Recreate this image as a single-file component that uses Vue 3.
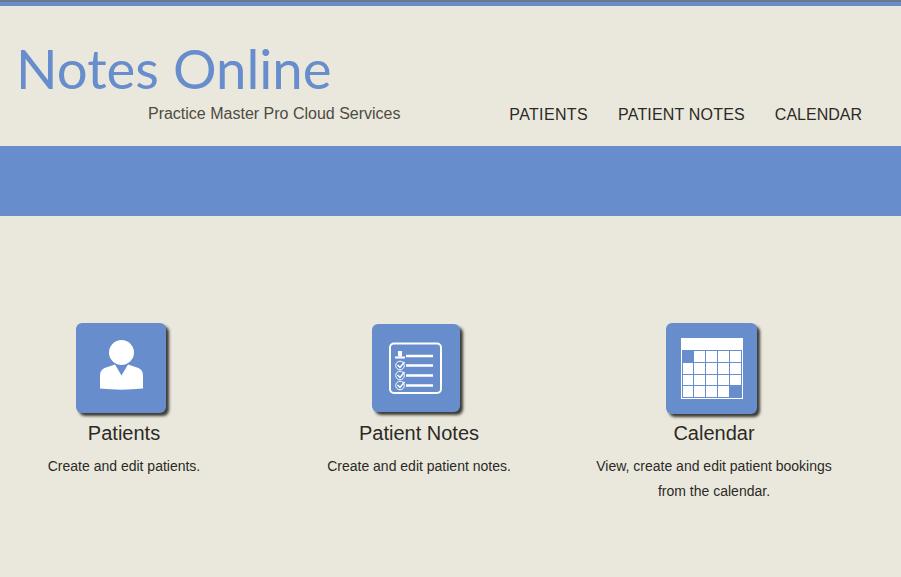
<script setup>
const navItems = ['PATIENTS', 'PATIENT NOTES', 'CALENDAR']

const calendarRows = [
  [1, 0, 0, 0, 0],
  [0, 0, 0, 0, 0],
  [0, 0, 0, 0, 0],
  [0, 0, 0, 0, 1]
]
</script>

<template>
  <div class="page">
    <header class="site-header">
      <div class="brand">
        <h1 class="brand-title">Notes Online</h1>
        <p class="brand-sub">Practice Master Pro Cloud Services</p>
      </div>
      <nav class="main-nav">
        <a v-for="item in navItems" :key="item" class="nav-link">{{ item }}</a>
      </nav>
    </header>

    <div class="banner"></div>

    <main class="features">
      <section class="feature">
        <div class="tile tile-patients">
          <svg class="icon-person" width="44" height="50" viewBox="0 0 44 50">
            <circle cx="21.500" cy="12.500" r="12.500" fill="#fff" />
            <path d="M0 36c0-5 2-7 6-8.500l9-3 6.500 11 6.500-11 9 3c4 1.500 6 3.500 6 8.500v12.500c-14 1.500-29 1.500-43 0z" fill="#fff" />
          </svg>
        </div>
        <h2 class="feature-title">Patients</h2>
        <p class="feature-text">Create and edit patients.</p>
      </section>

      <section class="feature">
        <div class="tile tile-notes">
          <svg width="54" height="52" viewBox="0 0 54 52" fill="none" stroke="#fff">
            <rect x="1" y="1.500" width="51" height="49.500" rx="4" stroke-width="2" />
            <rect x="9" y="9" width="4" height="5.500" fill="#fff" stroke="none" />
            <rect x="6" y="14.500" width="10" height="2" fill="#fff" stroke="none" />
            <path d="M17 14h27M17 23.500h27M17 33.500h27M17 43.500h27" stroke-width="2.500" />
            <g stroke-width="1">
              <circle cx="11" cy="23.500" r="4.300" />
              <circle cx="11" cy="33.500" r="4.300" />
              <circle cx="11" cy="43.500" r="4.300" />
            </g>
            <path d="M8.500 23l2.500 2.500 4.500-5.500M8.500 33l2.500 2.500 4.500-5.500M8.500 43l2.500 2.500 4.500-5.500" stroke-width="1.500" />
          </svg>
        </div>
        <h2 class="feature-title">Patient Notes</h2>
        <p class="feature-text">Create and edit patient notes.</p>
      </section>

      <section class="feature">
        <div class="tile tile-calendar">
          <div class="cal">
            <div class="cal-head"></div>
            <div class="cal-grid">
              <template v-for="(row, r) in calendarRows" :key="r">
                <span
                  v-for="(cell, c) in row"
                  :key="c"
                  class="cal-cell"
                  :class="{ 'cal-cell-on': cell }"
                ></span>
              </template>
            </div>
          </div>
        </div>
        <h2 class="feature-title">Calendar</h2>
        <p class="feature-text">View, create and edit patient bookings from the calendar.</p>
      </section>
    </main>
  </div>
</template>

<style>
html, body {
  background: #eae8dd;
}
</style>

<style scoped>
.page {
  height: 577px;
  overflow: hidden;
  background: #eae8dd;
  border-top: 2px solid #6f7786;
  font-family: "Liberation Sans", Arial, sans-serif;
  color: #2b2a26;
}

.site-header {
  height: 140px;
  border-top: 4px solid #678dcc;
  display: flex;
  justify-content: space-between;
  align-items: flex-start;
  padding-right: 39px;
}

.brand {
  padding: 30px 0 0 16px;
  width: 384.500px;
}

.brand-title {
  margin: 0;
  font-family: Lato, sans-serif;
  font-size: 54.500px;
  font-weight: 400;
  line-height: 64px;
  color: #678dcc;
  white-space: nowrap;
}

.brand-sub {
  margin: 4px 0 0;
  text-align: right;
  font-size: 16px;
  line-height: 20px;
  color: #4d4b43;
  white-space: nowrap;
}

.main-nav {
  display: flex;
  gap: 30px;
  padding-top: 99px;
}

.nav-link {
  font-size: 16px;
  line-height: 20px;
  letter-spacing: 0.18px;
  color: #2b2a26;
  white-space: nowrap;
}

.nav-link:first-child {
  letter-spacing: 0.36px;
}

.nav-link:last-child {
  letter-spacing: 0;
}

.banner {
  height: 70px;
  background: #678dcc;
}

.features {
  display: grid;
  grid-template-columns: repeat(3, 248px);
  gap: 47px;
  padding-top: 107px;
}

.feature {
  display: flex;
  flex-direction: column;
  align-items: center;
  text-align: center;
}

.tile {
  display: flex;
  align-items: center;
  justify-content: center;
  background: #678dcc;
  border-radius: 6px;
  box-shadow: 3px 3px 3px #3b3a34;
}

.tile-patients {
  width: 90px;
  height: 90px;
  margin-right: 6px;
}

.icon-person {
  margin-bottom: 7px;
  margin-left: 2px;
}

.tile-notes {
  width: 88px;
  height: 88px;
  margin-top: 1px;
  margin-right: 6px;
}

.tile-calendar {
  width: 91px;
  height: 91px;
  margin-right: 5px;
}

.feature-title {
  margin: 9px 0 0;
  font-size: 20px;
  font-weight: 400;
  line-height: 22px;
  color: #2b2a26;
}

.tile-notes + .feature-title {
  margin-top: 10px;
}

.tile-calendar + .feature-title {
  margin-top: 8px;
}

.feature-text {
  margin: 10px 0 0;
  font-size: 14px;
  line-height: 25px;
  color: #2b2a26;
}

.cal {
  width: 62px;
}

.cal-head {
  height: 12px;
  background: #fff;
}

.cal-grid {
  display: grid;
  grid-template-columns: repeat(5, 1fr);
  gap: 1px;
  padding: 1px;
  background: #678dcc;
  border-bottom: 1px solid #fff;
  border-right: 1px solid #fff;
  border-left: 1px solid #fff;
  height: 49px;
  box-sizing: border-box;
}

.cal-cell {
  background: #fff;
}

.cal-cell-on {
  background: #678dcc;
}
</style>
